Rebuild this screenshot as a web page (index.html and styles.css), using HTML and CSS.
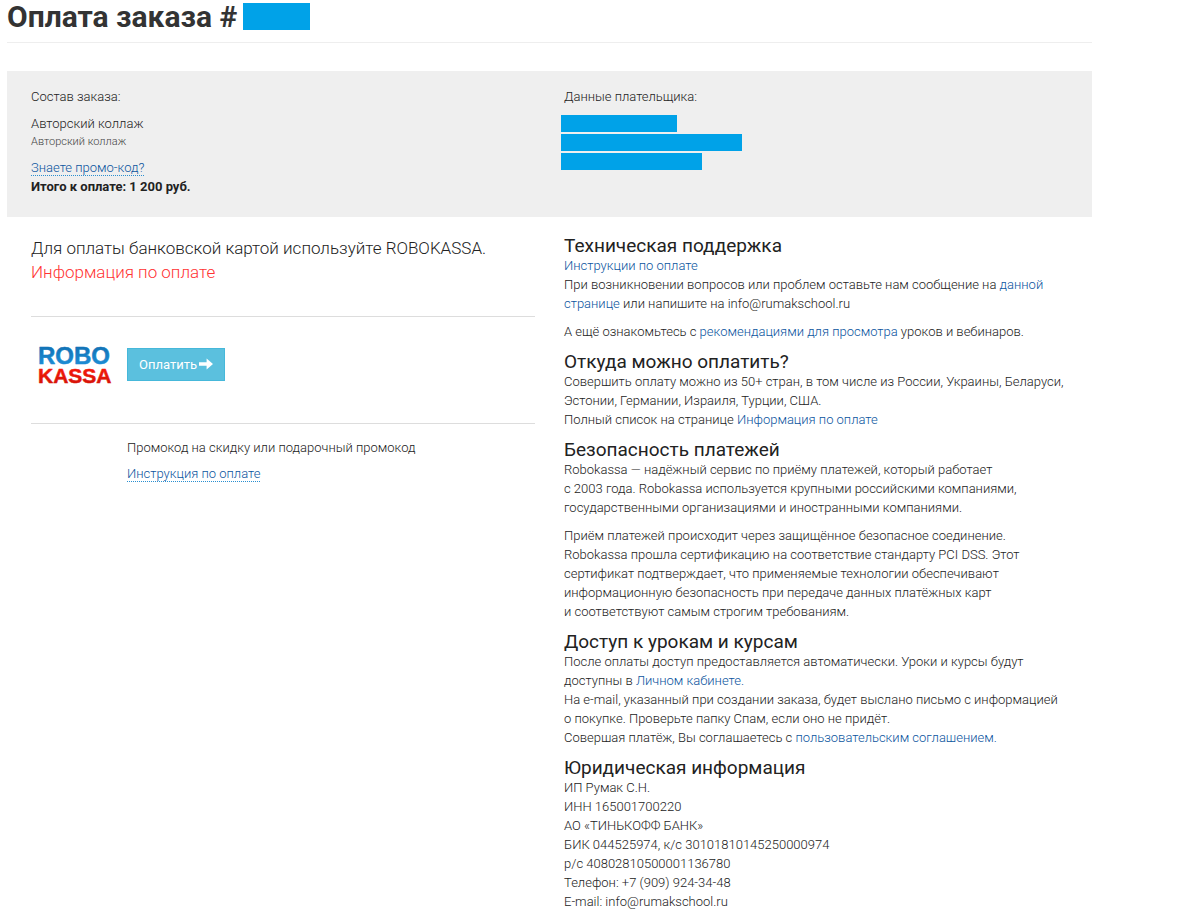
FILE: index.html
```html
<!DOCTYPE html>
<html lang="ru">
<head>
  <meta charset="UTF-8">
  <title>Оплата заказа</title>
  <link rel="stylesheet" href="styles.css">
</head>
<body>

  <div class="page">
    <header class="page-header">
      <h1>Оплата заказа #</h1>
      <span class="mask mask-number"></span>
    </header>

    <!-- Order summary -->
    <section class="order columns">
      <div class="order-items">
        <p>Состав заказа:</p>
        <p class="item">Авторский коллаж</p>
        <p class="item-note">Авторский коллаж</p>
        <p class="promo"><a class="dotted" href="#">Знаете промо-код?</a></p>
        <p><strong>Итого к оплате: 1 200 руб.</strong></p>
      </div>
      <div class="order-payer">
        <p>Данные плательщика:</p>
        <div class="masks">
          <span class="mask mask-name"></span>
          <span class="mask mask-email"></span>
          <span class="mask mask-phone"></span>
        </div>
      </div>
    </section>

    <main class="columns">
      <!-- Payment methods -->
      <section class="payment">
        <p class="lead">Для оплаты банковской картой используйте ROBOKASSA.<br>
          <a class="red" href="#">Информация по оплате</a></p>

        <div class="method">
          <svg class="logo" width="96" height="52" viewBox="0 0 96 52" role="img" aria-label="Robokassa">
            <defs>
              <linearGradient id="blue" x1="0" y1="0" x2="0" y2="1">
                <stop offset="0" stop-color="#0f6cae"/>
                <stop offset="1" stop-color="#1f93dc"/>
              </linearGradient>
              <linearGradient id="red" x1="0" y1="0" x2="0" y2="1">
                <stop offset="0" stop-color="#ff1a0a"/>
                <stop offset="1" stop-color="#cf1208"/>
              </linearGradient>
            </defs>
            <text class="logo-robo" x="7" y="26" fill="url(#blue)" stroke="url(#blue)">ROBO</text>
            <text class="logo-kassa" x="7" y="45" fill="url(#red)" stroke="url(#red)">KASSA</text>
          </svg>
          <button class="btn" type="button">Оплатить
            <svg width="14" height="12" viewBox="0 0 14 12" aria-hidden="true">
              <path d="M0 4.3h7.6V.4L14 6l-6.4 5.6V7.7H0z" fill="#fff"/>
            </svg>
          </button>
        </div>

        <div class="method-info">
          <p>Промокод на скидку или подарочный промокод</p>
          <p><a class="dotted" href="#">Инструкция по оплате</a></p>
        </div>
      </section>

      <!-- Help texts -->
      <section class="info">
        <h2>Техническая поддержка</h2>
        <p><a href="#">Инструкции по оплате</a><br>
          При возникновении вопросов или проблем оставьте нам сообщение на <a href="#">данной<br>
          странице</a> или напишите на info@rumakschool.ru</p>
        <p>А ещё ознакомьтесь с <a href="#">рекомендациями для просмотра</a> уроков и вебинаров.</p>

        <h2>Откуда можно оплатить?</h2>
        <p>Совершить оплату можно из 50+ стран, в том числе из России, Украины, Беларуси,<br>
          Эстонии, Германии, Израиля, Турции, США.<br>
          Полный список на странице <a href="#">Информация по оплате</a></p>

        <h2>Безопасность платежей</h2>
        <p>Robokassa — надёжный сервис по приёму платежей, который работает<br>
          с 2003 года. Robokassa используется крупными российскими компаниями,<br>
          государственными организациями и иностранными компаниями.</p>
        <p>Приём платежей происходит через защищённое безопасное соединение.<br>
          Robokassa прошла сертификацию на соответствие стандарту PCI DSS. Этот<br>
          сертификат подтверждает, что применяемые технологии обеспечивают<br>
          информационную безопасность при передаче данных платёжных карт<br>
          и соответствуют самым строгим требованиям.</p>

        <h2>Доступ к урокам и курсам</h2>
        <p>После оплаты доступ предоставляется автоматически. Уроки и курсы будут<br>
          доступны в <a href="#">Личном кабинете.</a><br>
          На e-mail, указанный при создании заказа, будет выслано письмо с информацией<br>
          о покупке. Проверьте папку Спам, если оно не придёт.<br>
          Совершая платёж, Вы соглашаетесь с <a href="#">пользовательским соглашением.</a></p>

        <h2>Юридическая информация</h2>
        <p>ИП Румак С.Н.<br>
          ИНН 165001700220<br>
          АО «ТИНЬКОФФ БАНК»<br>
          БИК 044525974, к/с 30101810145250000974<br>
          р/с 40802810500001136780<br>
          Телефон: +7 (909) 924-34-48<br>
          E-mail: info@rumakschool.ru</p>
      </section>
    </main>
  </div>

</body>
</html>
```
FILE: styles.css
```css
* {
  box-sizing: border-box;
}

body {
  margin: 0;
  background: #fff;
  color: #222;
  font-family: Roboto, "Open Sans", sans-serif;
  font-size: 13px;
  line-height: 19px;
  font-weight: 300;
}

h1, h2, p {
  margin: 0;
}

a {
  color: #0a549e;
  text-decoration: none;
}

.page {
  padding: 0 108px 0 7px;
}

/* two equal halves, shared by the summary and the main part */
.columns {
  display: grid;
  grid-template-columns: 1fr 1fr;
  column-gap: 29px;
  padding: 0 24px;
}

/* Header */
.page-header {
  display: flex;
  align-items: flex-start;
  gap: 6px;
  height: 43px;
  margin-bottom: 28px;
  border-bottom: 1px solid #eee;
}

.page-header h1 {
  color: #333;
  font-size: 30px;
  line-height: 34px;
  font-weight: 700;
}

/* hidden personal data */
.mask {
  display: block;
  height: 17px;
  background: #00a2e8;
}

.mask-number {
  width: 67px;
  height: 27px;
  margin-top: 3px;
}

.mask-name { width: 116px; }
.mask-email { width: 181px; }
.mask-phone { width: 141px; }

.masks {
  display: grid;
  gap: 2px;
  margin: 9px 0 0 -3px;
}

/* Order summary */
.order {
  padding-top: 16px;
  padding-bottom: 21px;
  background: #efefef;
}

.item {
  margin-top: 8px;
}

.item-note {
  color: #444;
  font-size: 11px;
  line-height: 17px;
}

.promo {
  margin-top: 8px;
}

.order strong {
  color: #222;
  font-weight: 700;
}

.dotted {
  border-bottom: 1px dotted #2a8fd0;
}

/* Payment methods */
.lead {
  padding: 19px 0 32px;
  border-bottom: 1px solid #ddd;
  font-size: 17px;
  line-height: 24px;
}

.red {
  color: #ff3333;
}

.method {
  display: flex;
  align-items: center;
  height: 107px;
  padding-bottom: 12px;
  border-bottom: 1px solid #ddd;
}

.logo {
  flex: none;
}

.logo-robo,
.logo-kassa {
  font-family: "Liberation Sans", Arial, sans-serif;
  font-weight: 700;
  stroke-width: 0.5px;
  stroke-linejoin: round;
}

.logo-robo { font-size: 24px; }
.logo-kassa { font-size: 21px; }

.btn {
  display: flex;
  align-items: center;
  gap: 2px;
  height: 33px;
  padding: 0 11px;
  border: 1px solid #46b8da;
  background: #5bc0de;
  color: #fff;
  font: inherit;
  font-weight: 400;
}

.method-info {
  padding: 14px 0 0 96px;
}

.method-info p + p {
  margin-top: 7px;
}

/* Help texts */
.info {
  padding-top: 18px;
}

.info h2 {
  color: #222;
  font-size: 19px;
  line-height: 21px;
  font-weight: 400;
}

.info p + p {
  margin-top: 9px;
}

.info p + h2 {
  margin-top: 10px;
}
```
